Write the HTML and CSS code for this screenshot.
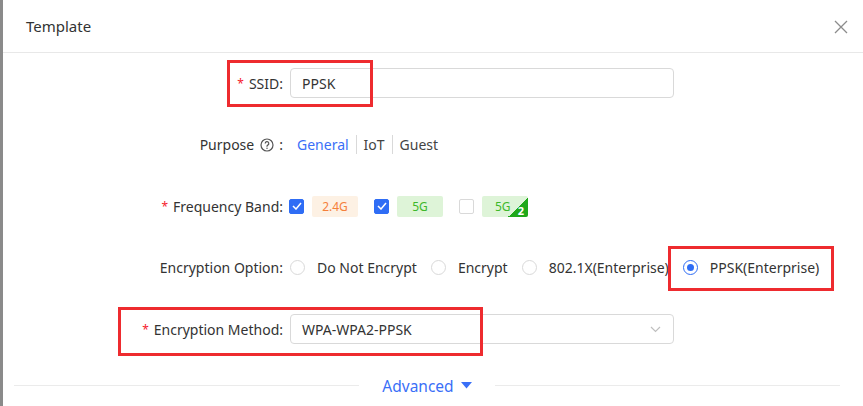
FILE: index.html
```html
<!DOCTYPE html>
<html>
<head>
<meta charset="utf-8">
<link rel="stylesheet" href="styles.css">
</head>
<body>
<div class="modal">
  <div class="header">
    <span class="title">Template</span>
    <svg class="close" width="14" height="14" viewBox="0 0 14 14"><path d="M1 1L13 13M13 1L1 13" stroke="#8c8c8c" stroke-width="1.3" fill="none"/></svg>
  </div>
  <div class="form">
    <div class="row">
      <div class="label"><span class="req">*</span>SSID:</div>
      <div class="control"><div class="input">PPSK</div></div>
    </div>
    <div class="row">
      <div class="label">Purpose
        <svg class="help" width="14" height="14" viewBox="0 0 14 14"><circle cx="7" cy="7" r="6" stroke="#555" stroke-width="1.2" fill="none"/><path d="M5.2 5.5a1.8 1.8 0 1 1 2.6 1.6c-.6.3-.8.6-.8 1.2v.4" stroke="#555" stroke-width="1.2" fill="none"/><circle cx="7" cy="10.3" r=".75" fill="#555"/></svg>:</div>
      <div class="control purpose">
        <span class="opt active">General</span><span class="sep"></span><span class="opt">IoT</span><span class="sep"></span><span class="opt">Guest</span>
      </div>
    </div>
    <div class="row">
      <div class="label"><span class="req">*</span>Frequency Band:</div>
      <div class="control bands">
        <span class="cb checked"><svg width="10" height="8" viewBox="0 0 10 8"><path d="M1 4l3 3 5-6" stroke="#fff" stroke-width="1.5" fill="none"/></svg></span>
        <span class="tag orange">2.4G</span>
        <span class="cb checked"><svg width="10" height="8" viewBox="0 0 10 8"><path d="M1 4l3 3 5-6" stroke="#fff" stroke-width="1.5" fill="none"/></svg></span>
        <span class="tag green">5G</span>
        <span class="cb"></span>
        <span class="tag green two">5G<span class="corner"><span class="num">2</span></span></span>
      </div>
    </div>
    <div class="row">
      <div class="label">Encryption Option:</div>
      <div class="control radios">
        <span class="radio"></span><span class="rtext">Do Not Encrypt</span>
        <span class="radio"></span><span class="rtext">Encrypt</span>
        <span class="radio"></span><span class="rtext tight">802.1X(Enterprise)</span>
        <span class="radio on"></span><span class="rtext">PPSK(Enterprise)</span>
      </div>
    </div>
    <div class="row">
      <div class="label"><span class="req">*</span>Encryption Method:</div>
      <div class="control"><div class="input select">WPA-WPA2-PPSK
        <svg class="chev" width="11" height="7" viewBox="0 0 11 7"><path d="M1 1l4.5 4.5L10 1" stroke="#bfbfbf" stroke-width="1.2" fill="none"/></svg></div></div>
    </div>
    <div class="divider">
      <span class="line"></span>
      <span class="adv">Advanced <svg width="11" height="7" viewBox="0 0 11 7"><path d="M0 0h11L5.5 6.5z" fill="#3a6ff7"/></svg></span>
      <span class="line"></span>
    </div>
  </div>
  <div class="mark m1"></div>
  <div class="mark m2"></div>
  <div class="mark m3"></div>
</div>
</body>
</html>
```
FILE: styles.css
```css
html, body {
  margin: 0;
  padding: 0;
  background: #fff;
}
body {
  font-family: "Noto Sans", "Open Sans", sans-serif;
  font-size: 14px;
  color: #333;
  width: 863px;
  height: 406px;
  overflow: hidden;
}
.modal {
  position: relative;
  height: 406px;
  border-left: 3px solid #8a8a8a;
  box-sizing: border-box;
}
.header {
  height: 52px;
  border-bottom: 1px solid #e8e8e8;
  display: flex;
  align-items: center;
  justify-content: space-between;
  padding: 0 15px 0 23px;
}
.title {
  font-size: 15px;
  color: #333;
}
.close {
  margin-top: 1px;
}
.form {
  padding-top: 15px;
}
.row {
  display: grid;
  grid-template-columns: 280px 1fr;
  column-gap: 7px;
  height: 30px;
  align-items: center;
  margin-bottom: 31.5px;
}
.label {
  text-align: right;
  display: flex;
  justify-content: flex-end;
  align-items: center;
  white-space: nowrap;
}
.req {
  color: #f5222d;
  margin-right: 5px;
  font-size: 12px;
}
.help {
  margin: 0 5px 0 6px;
}
.control {
  display: flex;
  align-items: center;
}
.input {
  width: 384px;
  height: 30px;
  box-sizing: border-box;
  border: 1px solid #d9d9d9;
  border-radius: 4px;
  padding: 0 11px;
  display: flex;
  align-items: center;
  color: #333;
}
.select {
  justify-content: space-between;
  padding-right: 12px;
}
.purpose .opt {
  color: #444;
}
.purpose .opt.active {
  color: #3a6ff7;
  margin-left: 7px;
}
.sep {
  width: 1px;
  height: 19px;
  background: #d9d9d9;
  margin: 0 7px 0 7px;
}
.bands {
  margin-left: -1px;
}
.cb {
  width: 15px;
  height: 15px;
  box-sizing: border-box;
  border: 1px solid #d9d9d9;
  border-radius: 2px;
  display: inline-flex;
  align-items: center;
  justify-content: center;
  margin-right: 8px;
}
.cb.checked {
  background: #2f6df5;
  border-color: #2f6df5;
}
.tag {
  position: relative;
  width: 46px;
  height: 21px;
  display: inline-flex;
  align-items: center;
  justify-content: center;
  font-size: 12px;
  border-radius: 2px;
  margin-right: 16px;
  overflow: hidden;
}
.tag.orange {
  background: #fdf1e4;
  color: #f5803a;
}
.tag.green {
  background: #def4d8;
  color: #3db82a;
}
.tag.two {
  justify-content: flex-start;
  padding-left: 13px;
  box-sizing: border-box;
}
.corner {
  position: absolute;
  right: 0;
  bottom: 0;
  width: 20px;
  height: 20px;
  background: linear-gradient(to bottom right, transparent 50%, #1fa81a 50%);
}
.num {
  position: absolute;
  right: 4px;
  bottom: -1px;
  color: #fff;
  font-size: 11px;
  font-weight: 700;
}
.radio {
  width: 15px;
  height: 15px;
  box-sizing: border-box;
  border: 1px solid #d9d9d9;
  border-radius: 50%;
  margin-right: 12px;
  position: relative;
}
.radio.on {
  border-color: #2f6df5;
}
.radio.on::after {
  content: "";
  position: absolute;
  left: 3px;
  top: 3px;
  width: 7px;
  height: 7px;
  border-radius: 50%;
  background: #2f6df5;
}
.rtext {
  margin-right: 14px;
}
.rtext.tight {
  margin-right: 14px;
}
.divider {
  display: flex;
  align-items: center;
  margin: 27px 23px 0 11px;
  height: 20px;
}
.line {
  flex: 1;
  height: 1px;
  background: #ebebeb;
}
.adv {
  color: #3a6ff7;
  font-size: 15.5px;
  padding: 0 23px;
  display: flex;
  align-items: center;
  gap: 7px;
}
.mark {
  position: absolute;
  border: 3px solid #ee2b2f;
  box-sizing: border-box;
}
.m1 {
  left: 224px;
  top: 60px;
  width: 146px;
  height: 47px;
}
.m2 {
  left: 665px;
  top: 246px;
  width: 166px;
  height: 45px;
}
.m3 {
  left: 115px;
  top: 307px;
  width: 365px;
  height: 49px;
}
```
